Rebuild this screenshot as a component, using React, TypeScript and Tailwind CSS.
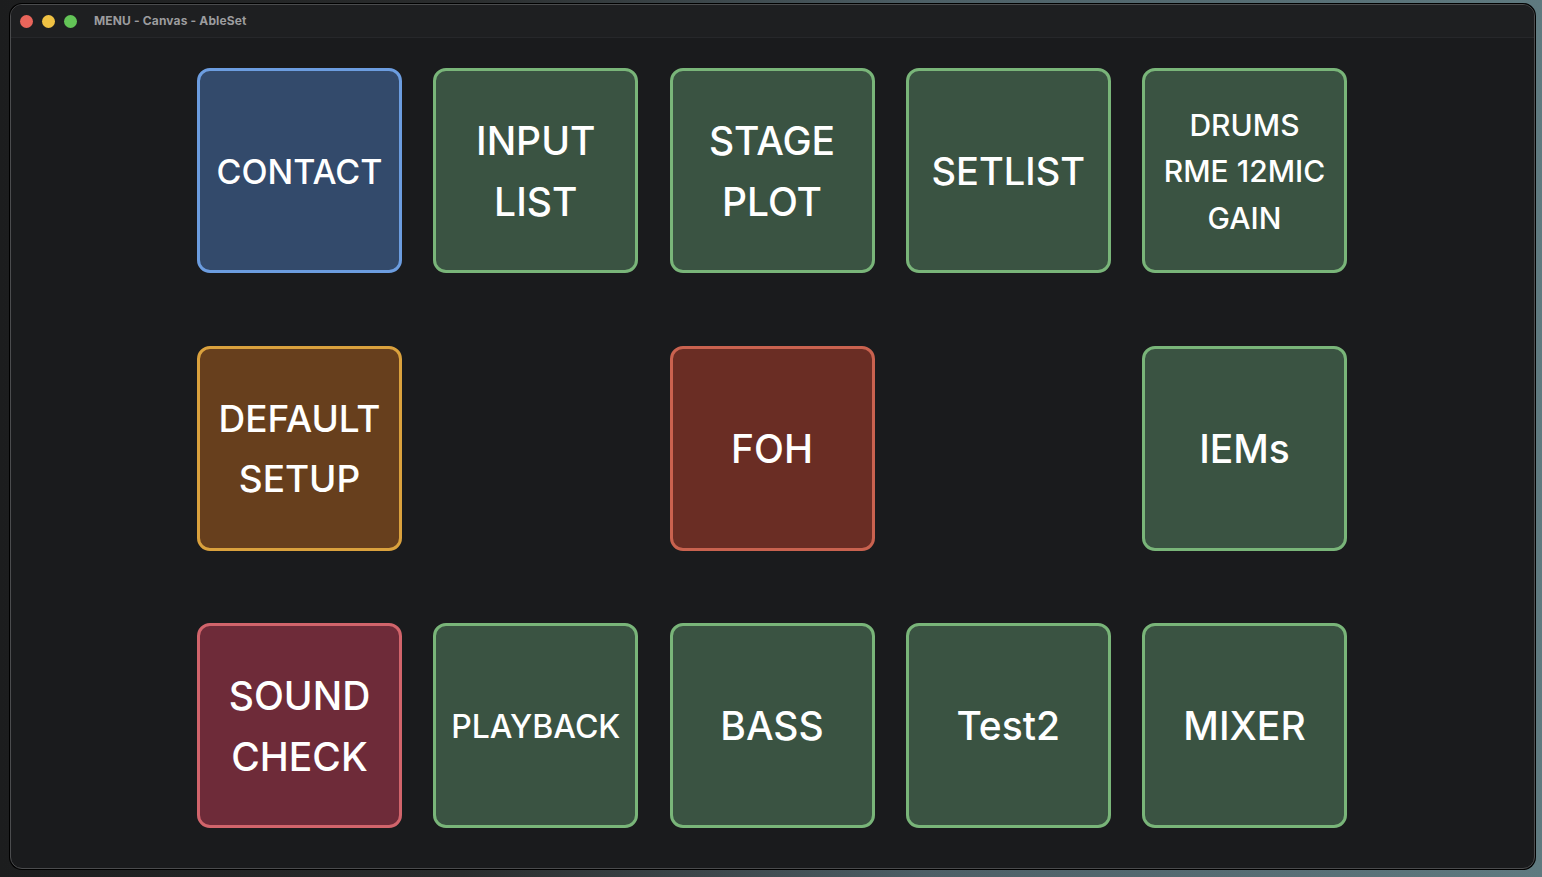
import React from "react";

type Tile = { lines: string[]; size: string; tone: "blue" | "green" | "brown" | "red" | "wine" } | null;

const tones: Record<string, string> = {
  blue: "bg-[#334a6b] border-[#6c9de0]",
  green: "bg-[#3a5342] border-[#79b579]",
  brown: "bg-[#673f1d] border-[#daa13d]",
  red: "bg-[#6a2d24] border-[#c9624f]",
  wine: "bg-[#6e2b39] border-[#d1646b]",
};

const tiles: Tile[] = [
  { lines: ["CONTACT"], size: "text-[34px] leading-[1.5]", tone: "blue" },
  { lines: ["INPUT", "LIST"], size: "text-[39px] leading-[1.55]", tone: "green" },
  { lines: ["STAGE", "PLOT"], size: "text-[39px] leading-[1.55]", tone: "green" },
  { lines: ["SETLIST"], size: "text-[38px] leading-[1.5]", tone: "green" },
  { lines: ["DRUMS", "RME 12MIC", "GAIN"], size: "text-[30px] leading-[1.55]", tone: "green" },
  { lines: ["DEFAULT", "SETUP"], size: "text-[37px] leading-[1.62]", tone: "brown" },
  null,
  { lines: ["FOH"], size: "text-[39px] leading-[1.5]", tone: "red" },
  null,
  { lines: ["IEMs"], size: "text-[39px] leading-[1.5]", tone: "green" },
  { lines: ["SOUND", "CHECK"], size: "text-[39px] leading-[1.55]", tone: "wine" },
  { lines: ["PLAYBACK"], size: "text-[32px] leading-[1.5]", tone: "green" },
  { lines: ["BASS"], size: "text-[39px] leading-[1.5]", tone: "green" },
  { lines: ["Test2"], size: "text-[39px] leading-[1.5]", tone: "green" },
  { lines: ["MIXER"], size: "text-[39px] leading-[1.5]", tone: "green" },
];

export default function App() {
  return (
    <div
      className="w-[1542px] h-[877px] overflow-hidden bg-[linear-gradient(90deg,#1c1d1e_0%,#2a2c2d_30%,#4d5f66_60%,#5f7a80_100%)] pl-[10px] pt-[4px]"
      style={{ fontFamily: "Inter, 'Noto Sans', sans-serif" }}
    >
      <div className="w-[1525px] h-[865px] rounded-[12px] border border-[#4b4c4e] bg-[#1a1b1d] flex flex-col overflow-hidden shadow-[0_0_0_1px_#000]">
        <div className="h-[33px] shrink-0 flex items-center bg-[#1e1f21] border-b border-[#26272a] pl-[9px]">
          <div className="flex items-center gap-[9px]">
            <span className="w-[13px] h-[13px] rounded-full bg-[#e9655b]" />
            <span className="w-[13px] h-[13px] rounded-full bg-[#efc143]" />
            <span className="w-[13px] h-[13px] rounded-full bg-[#63c457]" />
          </div>
          <span className="ml-[17px] text-[12px] font-bold text-[#9c9c9e] tracking-[0.15px]">
            MENU - Canvas - AbleSet
          </span>
        </div>
        <div className="flex-1 pt-[30px] pl-[186px]">
          <div className="grid grid-cols-[repeat(5,205px)] auto-rows-[205px] gap-x-[31.25px] gap-y-[72.5px]">
            {tiles.map((t, i) =>
              t ? (
                <div
                  key={i}
                  className={`rounded-[13px] border-[3px] flex flex-col items-center justify-center text-white text-center font-medium pt-[2px] ${tones[t.tone]} ${t.size}`}
                >
                  {t.lines.map((l, j) => (
                    <div key={j} className="whitespace-nowrap">
                      {l}
                    </div>
                  ))}
                </div>
              ) : (
                <div key={i} />
              )
            )}
          </div>
        </div>
      </div>
    </div>
  );
}
